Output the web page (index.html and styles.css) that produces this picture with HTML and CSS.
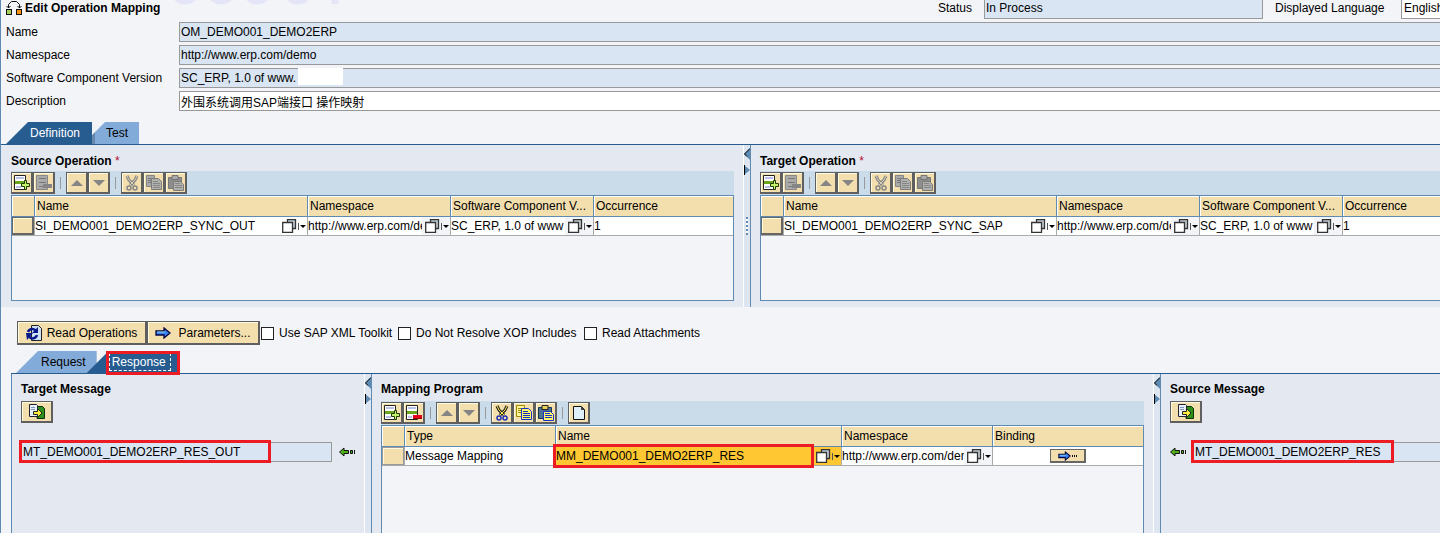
FILE: index.html
```html
<!DOCTYPE html>
<html lang="en">
<head>
<meta charset="utf-8">
<title>Edit Operation Mapping</title>
<link rel="stylesheet" href="styles.css">
</head>
<body>
<svg class="defs" aria-hidden="true">
  <symbol id="i-add" viewBox="0 0 16 16"><path d="M.5.5h11v14H.5z" fill="#fff" stroke="#222"/><path d="M2 2h8v2H2zM2 11h5v2H2z" fill="#b9bfe6"/><path d="M1 6h10v3H1z" fill="#6ba51e"/><path d="M10.500 5.500h2v3h3v3h-3v3h-2v-3h-3v-3h3z" fill="#c6ef6c" stroke="#1d3a00"/></symbol>
  <symbol id="i-del" viewBox="0 0 16 16"><path d="M.5.5h11v14H.5z" fill="#fff" stroke="#222"/><path d="M2 2h8v2H2zM2 11h4v2H2z" fill="#b9bfe6"/><path d="M1 6h10v3H1z" fill="#6ba51e"/><path d="M7 10h9v3H7z" fill="#e3001b"/><path d="M7 13.500h9" stroke="#900"/></symbol>
  <symbol id="i-del-off" viewBox="0 0 16 16"><path d="M.5.5h11v14H.5z" fill="#aaa" stroke="#888"/><path d="M3 3.500h7M3 7.500h7M3 11.500h4" stroke="#777"/><path d="M7 9h9v4H7z" fill="#858585"/></symbol>
  <symbol id="i-up" viewBox="0 0 16 16"><path d="M8 5l6 6H2z" fill="#858585"/></symbol>
  <symbol id="i-down" viewBox="0 0 16 16"><path d="M2 5h12l-6 6z" fill="#858585"/></symbol>
  <symbol id="i-cut" viewBox="0 0 16 16"><path d="M3 1l2 4 5 5M13 1l-2 4-5 5" fill="none" stroke="#222" stroke-width="3"/><path d="M3 1l2 4 5 5M13 1l-2 4-5 5" fill="none" stroke="#ffe94a"/><circle cx="5" cy="13" r="2" fill="none" stroke="#1d2fb5" stroke-width="1.500"/><circle cx="11" cy="13" r="2" fill="none" stroke="#1d2fb5" stroke-width="1.500"/></symbol>
  <symbol id="i-cut-off" viewBox="0 0 16 16"><path d="M3 1l2 4 5 5M13 1l-2 4-5 5" fill="none" stroke="#858585" stroke-width="3"/><path d="M3 1l2 4 5 5M13 1l-2 4-5 5" fill="none" stroke="#d8d0b8"/><circle cx="5" cy="13" r="2" fill="none" stroke="#858585" stroke-width="1.500"/><circle cx="11" cy="13" r="2" fill="none" stroke="#858585" stroke-width="1.500"/></symbol>
  <symbol id="i-copy" viewBox="0 0 16 16"><path d="M.5.500h8v11h-8z" fill="#fff6a0" stroke="#a08a00"/><path d="M2 3.500h4M2 5.500h4M2 7.500h4" stroke="#a08a00"/><path d="M5.500 3.500h7l3 3v8h-10z" fill="#fff56d" stroke="#1732c5"/><path d="M7 6.500h5M7 8.500h7M7 10.500h7M7 12.500h7" stroke="#1732c5"/></symbol>
  <symbol id="i-copy-off" viewBox="0 0 16 16"><path d="M.5.500h8v11h-8z" fill="#aaa" stroke="#858585"/><path d="M2 3.500h4M2 5.500h4M2 7.500h4" stroke="#777"/><path d="M5.500 3.500h7l3 3v8h-10z" fill="#b0b0ac" stroke="#7c7c7c"/><path d="M7 6.500h5M7 8.500h7M7 10.500h7M7 12.500h7" stroke="#868686"/></symbol>
  <symbol id="i-paste" viewBox="0 0 16 16"><path d="M.5 2.500h13v11H.5z" fill="#4d7190" stroke="#17364f"/><path d="M4 .5h6v4H4z" fill="#e8d25b" stroke="#222"/><path d="M5.500 6.500h7l3 3v6h-10z" fill="#fff56d" stroke="#1732c5"/><path d="M7 8.500h5M7 10.500h7M7 12.500h7" stroke="#1732c5"/></symbol>
  <symbol id="i-paste-off" viewBox="0 0 16 16"><path d="M.5 2.500h13v11H.5z" fill="#8d8d8d" stroke="#777"/><path d="M4 .5h6v4H4z" fill="#aaa" stroke="#777"/><path d="M5.500 6.500h7l3 3v6h-10z" fill="#b0b0ac" stroke="#7c7c7c"/><path d="M7 8.500h5M7 10.500h7M7 12.500h7" stroke="#868686"/></symbol>
  <symbol id="i-new" viewBox="0 0 16 16"><path d="M2.500 1.500h8l3 3v10h-11z" fill="#deeffa" stroke="#111"/><path d="M10 1v4h4z" fill="#444"/></symbol>
  <symbol id="i-help" viewBox="0 0 24 14"><path d="M5.500.5h8v9h-8z" fill="#c2cdd6" stroke="#333" stroke-width="1.300"/><path d="M.7 3.500h9.800v9.800H.7z" fill="#fff" stroke="#333" stroke-width="1.300"/><path d="M16.500 4v7" stroke="#555"/><path d="M18 6h6l-3 3z" fill="#000"/></symbol>
  <symbol id="i-arrow" viewBox="0 0 16 12"><path d="M1 4h8V1l6 5-6 5V8H1z" fill="#3b7ff0" stroke="#04063e" stroke-width="1.300"/><path d="M2 5h8" stroke="#8fe0ff"/></symbol>
  <symbol id="i-green" viewBox="0 0 16 10"><path d="M.5 5L5 1v2.500h4.500v3H5V9z" fill="#4dae17" stroke="#111"/><path d="M11.500 3.500h2v3h-2z" fill="#4dae17" stroke="#111"/><path d="M15.500 3v4" stroke="#111"/></symbol>
  <symbol id="i-goto" viewBox="0 0 16 16"><path d="M8 2.500h5.500l2 2v10H8z" fill="#2d8f1a" stroke="#0b3206"/><path d="M.5.500h7l1 1v11h-8z" fill="#e8f2fb" stroke="#223"/><path d="M2 3.500h4M2 5.500h4" stroke="#7c93c0"/><path d="M4.500 7.500h4v-3L13 9l-4.500 4.500v-3h-4z" fill="#ffee3d" stroke="#222"/></symbol>
  <symbol id="i-tri-l" viewBox="0 0 6 12"><path d="M6 0v12L0 6z" fill="#5f8bb2"/><path d="M6 .5L.5 6 3 8.500" fill="none" stroke="#000"/></symbol>
  <symbol id="i-tri-r" viewBox="0 0 6 12"><path d="M0 1v10l6-5z" fill="#5f8bb2"/><path d="M.5 1v10" stroke="#000"/></symbol>
</svg>
<div class="app">
  <header class="head">
    <svg class="watermark" width="250" height="6" aria-hidden="true"><g fill="none" stroke="#e4e6f8" stroke-width="7"><ellipse cx="84" cy="-12" rx="12" ry="13"/><ellipse cx="120" cy="-12" rx="12" ry="13"/><ellipse cx="156" cy="-12" rx="12" ry="13"/><ellipse cx="197" cy="-12" rx="12" ry="13"/><path d="M234 0v4"/></g></svg>
    <h1 class="title"><svg width="16" height="16" viewBox="0 0 16 16"><path d="M2.500 8V4.500l3-3h5l3 3V8M.5 6l2 2 2-2M11.500 6l2 2 2-2" fill="none" stroke="#111"/><path d="M0 9h6v6H0zM10 9h6v6h-6z" fill="#111"/><path d="M1 10h4v4H1z" fill="#a6cf5b"/><path d="M11 10h4v4h-4z" fill="#ff9210"/></svg>Edit Operation Mapping</h1>
    <label for="status">Status</label>
    <input id="status" class="field cut" readonly value="In Process">
    <label for="lang" class="langlabel">Displayed Language</label>
    <div class="lang"><select id="lang"><option>English (Original Language)</option></select></div>
  </header>
  <div class="form">
    <label for="f1">Name</label><input id="f1" class="field" readonly value="OM_DEMO001_DEMO2ERP">
    <label for="f2">Namespace</label><input id="f2" class="field" readonly value="http://www.erp.com/demo">
    <label for="f3">Software Component Version</label><div class="wrap"><input id="f3" class="field" readonly value="SC_ERP, 1.0 of www."><span class="mask"></span></div>
    <label for="f4">Description</label><input id="f4" class="field edit" value="外围系统调用SAP端接口 操作映射">
  </div>

  <nav class="tabs">
    <button class="tab on">Definition</button><button class="tab next">Test</button>
  </nav>

  <main class="split top">
    <section class="pane">
      <h2>Source Operation <b class="req">*</b></h2>
      <div class="toolbar">
        <button class="tb" aria-label="Add"><svg><use href="#i-add"/></svg></button><button class="tb" aria-label="Remove"><svg><use href="#i-del-off"/></svg></button><i class="sep"></i>
        <button class="tb" aria-label="Up"><svg><use href="#i-up"/></svg></button><button class="tb" aria-label="Down"><svg><use href="#i-down"/></svg></button><i class="sep"></i>
        <button class="tb" aria-label="Cut"><svg><use href="#i-cut-off"/></svg></button><button class="tb" aria-label="Copy"><svg><use href="#i-copy-off"/></svg></button><button class="tb" aria-label="Paste"><svg><use href="#i-paste-off"/></svg></button>
      </div>
      <div class="grid">
        <table>
          <colgroup><col class="c-sel"><col><col class="c-ns"><col class="c-ns"><col class="c-occ"></colgroup>
          <thead><tr><th></th><th>Name</th><th>Namespace</th><th>Software Component V...</th><th>Occurrence</th></tr></thead>
          <tbody><tr>
            <td><button class="rowsel" aria-label="Select row"></button></td>
            <td><div class="cell"><input aria-label="Name" value="SI_DEMO001_DEMO2ERP_SYNC_OUT"><button class="help plain" aria-label="Choose"><svg><use href="#i-help"/></svg></button></div></td>
            <td><div class="cell"><input aria-label="Namespace" value="http://www.erp.com/demo"><button class="help" aria-label="Choose"><svg><use href="#i-help"/></svg></button></div></td>
            <td><div class="cell"><input aria-label="Software Component Version" value="SC_ERP, 1.0 of www"><button class="help" aria-label="Choose"><svg><use href="#i-help"/></svg></button></div></td>
            <td><div class="cell">1</div></td>
          </tr></tbody>
        </table>
      </div>
    </section>
    <div class="bar"><svg><use href="#i-tri-l"/></svg><svg><use href="#i-tri-r"/></svg><span class="grip"></span></div>
    <section class="pane bleed">
      <h2>Target Operation <b class="req">*</b></h2>
      <div class="toolbar">
        <button class="tb" aria-label="Add"><svg><use href="#i-add"/></svg></button><button class="tb" aria-label="Remove"><svg><use href="#i-del-off"/></svg></button><i class="sep"></i>
        <button class="tb" aria-label="Up"><svg><use href="#i-up"/></svg></button><button class="tb" aria-label="Down"><svg><use href="#i-down"/></svg></button><i class="sep"></i>
        <button class="tb" aria-label="Cut"><svg><use href="#i-cut-off"/></svg></button><button class="tb" aria-label="Copy"><svg><use href="#i-copy-off"/></svg></button><button class="tb" aria-label="Paste"><svg><use href="#i-paste-off"/></svg></button>
      </div>
      <div class="grid">
        <table>
          <colgroup><col class="c-sel"><col><col class="c-ns"><col class="c-ns"><col class="c-occ"></colgroup>
          <thead><tr><th></th><th>Name</th><th>Namespace</th><th>Software Component V...</th><th>Occurrence</th></tr></thead>
          <tbody><tr>
            <td><button class="rowsel" aria-label="Select row"></button></td>
            <td><div class="cell"><input aria-label="Name" value="SI_DEMO001_DEMO2ERP_SYNC_SAP"><button class="help plain" aria-label="Choose"><svg><use href="#i-help"/></svg></button></div></td>
            <td><div class="cell"><input aria-label="Namespace" value="http://www.erp.com/demo"><button class="help" aria-label="Choose"><svg><use href="#i-help"/></svg></button></div></td>
            <td><div class="cell"><input aria-label="Software Component Version" value="SC_ERP, 1.0 of www"><button class="help" aria-label="Choose"><svg><use href="#i-help"/></svg></button></div></td>
            <td><div class="cell">1</div></td>
          </tr></tbody>
        </table>
      </div>
    </section>
  </main>

  <div class="actions">
    <button class="act read"><svg width="16" height="16" viewBox="0 0 16 16"><path d="M5.500.500h7l3 3v12h-10z" fill="#cfe3f5" stroke="#222"/><path d="M2 7a4.500 4.500 0 0 1 8-1" fill="none" stroke="#06188c" stroke-width="2.500"/><path d="M12 2v6H6z" fill="#06188c"/><path d="M11 10a4.500 4.500 0 0 1-8 1.500" fill="none" stroke="#06188c" stroke-width="2.500"/><path d="M0 8h7l-6 7z" fill="#06188c"/></svg>Read Operations</button><button class="act par"><svg width="16" height="12"><use href="#i-arrow"/></svg>Parameters...</button>
    <label><input type="checkbox">Use SAP XML Toolkit</label>
    <label><input type="checkbox">Do Not Resolve XOP Includes</label>
    <label><input type="checkbox">Read Attachments</label>
  </div>

  <nav class="tabs sub">
    <button class="tab off">Request</button><span class="marked"><button class="tab on res"><span class="focus">Response</span></button></span>
  </nav>

  <div class="split low">
    <section class="pane msg">
      <h2>Target Message</h2>
      <button class="goto" aria-label="Open"><svg><use href="#i-goto"/></svg></button>
      <div class="msgrow">
        <div class="wrap m-out"><input aria-label="Target Message" class="field" readonly value="MT_DEMO001_DEMO2ERP_RES_OUT"></div>
        <svg class="green"><use href="#i-green"/></svg>
      </div>
    </section>
    <div class="bar"><svg><use href="#i-tri-l"/></svg><svg><use href="#i-tri-r"/></svg></div>
    <section class="pane map">
      <h2>Mapping Program</h2>
      <div class="toolbar">
        <button class="tb" aria-label="Add"><svg><use href="#i-add"/></svg></button><button class="tb" aria-label="Remove"><svg><use href="#i-del"/></svg></button><i class="sep"></i>
        <button class="tb" aria-label="Up"><svg><use href="#i-up"/></svg></button><button class="tb" aria-label="Down"><svg><use href="#i-down"/></svg></button><i class="sep"></i>
        <button class="tb" aria-label="Cut"><svg><use href="#i-cut"/></svg></button><button class="tb" aria-label="Copy"><svg><use href="#i-copy"/></svg></button><button class="tb" aria-label="Paste"><svg><use href="#i-paste"/></svg></button><i class="sep"></i>
        <button class="tb" aria-label="New"><svg><use href="#i-new"/></svg></button>
      </div>
      <div class="grid">
        <table>
          <colgroup><col class="c-sel"><col class="c-type"><col><col class="c-type"><col class="c-type"></colgroup>
          <thead><tr><th></th><th>Type</th><th>Name</th><th>Namespace</th><th>Binding</th></tr></thead>
          <tbody><tr>
            <td><button class="rowsel pressed" aria-label="Select row"></button></td>
            <td><div class="cell">Message Mapping</div></td>
            <td class="hot"><div class="cell"><input aria-label="Name" value="MM_DEMO001_DEMO2ERP_RES"><button class="help plain" aria-label="Choose"><svg><use href="#i-help"/></svg></button></div></td>
            <td><div class="cell"><input aria-label="Namespace" value="http://www.erp.com/demo"><button class="help" aria-label="Choose"><svg><use href="#i-help"/></svg></button></div></td>
            <td><div class="cell mid"><button class="bind" aria-label="Binding"><svg width="13" height="10" viewBox="0 0 16 12"><use href="#i-arrow"/></svg><svg width="6" height="2"><path d="M0 1h6" stroke="#111" stroke-width="2" stroke-dasharray="1 1"/></svg></button></div></td>
          </tr></tbody>
        </table>
      </div>
    </section>
    <div class="bar"><svg><use href="#i-tri-l"/></svg><svg><use href="#i-tri-r"/></svg></div>
    <section class="pane msg src">
      <h2>Source Message</h2>
      <button class="goto" aria-label="Open"><svg><use href="#i-goto"/></svg></button>
      <div class="msgrow">
        <svg class="green"><use href="#i-green"/></svg>
        <div class="wrap m-in"><input aria-label="Source Message" class="field" readonly value="MT_DEMO001_DEMO2ERP_RES"></div>
      </div>
    </section>
  </div>
</div>
</body>
</html>
```
FILE: styles.css
```css
*, *::before, *::after { box-sizing: border-box; }
body {
  margin: 0;
  background: #f3f4f8;
  color: #000;
  font: 12px/16px "Liberation Sans", Arial, "Noto Sans CJK SC", sans-serif;
}
button, input, select { font: inherit; color: inherit; margin: 0; padding: 0; border: 0; border-radius: 0; outline: 0; }
svg { display: block; flex: none; }
.defs { position: absolute; width: 0; height: 0; }
.app {
  display: flex;
  flex-direction: column;
  height: 100vh;
  overflow: hidden;
  border-left: 1px solid #5f8bb2;
}
.app > * { flex-shrink: 0; }

/* header and form */
.head {
  position: relative;
  display: grid;
  grid-template-columns: 1fr auto 279px auto 39px;
  column-gap: 12px;
  height: 19px;
  align-items: start;
}
.langlabel { min-width: 114px; }
.watermark { position: absolute; left: 100px; top: 0; }
.title { position: relative; display: flex; gap: 3px; margin: 0; padding-left: 5px; font-size: 12px; }
.field {
  width: 100%;
  height: 20px;
  padding: 0 1px;
  border: 1px solid #999;
  background: #d9e5f2;
}
.field.edit { background: #fff; }
.field.cut { height: 19px; padding-bottom: 3px; border-top: 0; }
.lang { height: 19px; overflow: hidden; border: solid #999; border-width: 0 0 1px 1px; background: #fff; }
.lang select { appearance: none; width: 180px; height: 16px; padding-left: 2px; background: #fff; }
.form {
  display: grid;
  grid-template-columns: 173px 1fr;
  row-gap: 3px;
  padding: 3px 0 0 5px;
  margin-right: -2px;
}
.form label { line-height: 20px; }
.wrap { position: relative; }
.wrap .field { display: block; }
.mask { position: absolute; left: 119px; top: 0; width: 45px; height: 17px; background: #fff; }

/* tabs */
.tabs { display: flex; height: 23px; margin-top: 11px; padding-left: 5px; border-bottom: 1px solid #265c8f; }
.tab { height: 22px; }
.tab.on {
  padding: 0 12px 0 24px;
  background: #265c8f;
  color: #fff;
  clip-path: polygon(22px 0, 100% 0, 100% 100%, 0 100%);
}
.tab.next { padding: 0 11px 0 14px; background: linear-gradient(90deg, #6488ad 3px, #83abd9 3px); clip-path: polygon(13px 0, 100% 0, 100% 100%, 0 100%, 0 13px); }
.tab.off { padding: 0 11px 0 25px; background: #83abd9; clip-path: polygon(22px 0, 100% 0, 100% 100%, 0 100%); }
.tabs.sub { margin: 6px 0 0 10px; }
.marked { position: relative; margin-left: -10px; }
.marked::after { content: ""; position: absolute; inset: 0 -1px -2px 19px; border: 3px solid #ed1c24; }
.tab.res { display: block; padding: 2px 8px 2px 22px; }
.focus { display: block; padding: 0 4px 0 2px; border: 1px dashed #fff; }

/* split areas */
.split { display: grid; background: #e4e9f1; }
.top { grid-template-columns: 742fr 8px 689fr; height: 162px; }
.low { flex: 1 1 0; min-height: 100px; margin-left: 10px; border-left: 1px solid #5f8bb2; grid-template-columns: 352fr 8px 781fr 8px 279fr; }
.pane { display: flex; flex-direction: column; min-width: 0; overflow: hidden; padding: 8px 9px 6px 10px; }
.low .pane { padding: 7px 9px 0; }
.pane.bleed { padding-left: 9px; padding-right: 0; }
h2 { margin: 0 0 2px; font-size: 12px; line-height: 16px; }
.low h2 { margin-bottom: 4px; }
.req { color: #b01030; font-weight: 400; }
.bar {
  display: flex;
  flex-direction: column;
  gap: 4px;
  padding-top: 3px;
  border-left: 1px solid #fff;
  border-right: 1px solid #5f8bb2;
  background: #dde6f0;
}
.bar svg { width: 6px; height: 12px; }
.grip { width: 2px; height: 18px; margin: 37px 0 0 2px; background: repeating-linear-gradient(#5f8bb2 0 2px, #fff 2px 4px); }

/* toolbars */
.toolbar { display: flex; align-items: center; height: 24px; background: #cadbea; }
.tb {
  display: grid;
  place-items: center;
  flex: none;
  width: 22px;
  height: 22px;
  border: solid #5f5f5f;
  border-width: 1px 2px 2px 1px;
  background: #f3dfae;
  box-shadow: inset 1px 1px #fffbe0;
}
.tb svg { width: 16px; height: 16px; }
.sep { width: 1px; height: 12px; margin: 0 5px; background: #999; }

/* tables */
.grid { flex: 1; border: 1px solid #5f8bb2; overflow: hidden; background: #f3f4f8; }
.low .grid { border-bottom: 0; }
.bleed .grid { border-right: 0; }
table { width: 100%; border-collapse: separate; border-spacing: 0; table-layout: fixed; }
.bleed table { min-width: 721px; }
.c-sel { width: 22px; }
.c-ns { width: 143px; }
.c-occ { width: 140px; }
.c-type { width: 151px; }
th {
  height: 21px;
  padding: 0 0 0 2px;
  border-left: 1px solid #5f8bb2;
  border-bottom: 1px solid #5f8bb2;
  background: #f3dfae;
  box-shadow: inset 1px 1px #fff;
  font-weight: 400;
  text-align: left;
  white-space: nowrap;
}
th:first-child { border-left: 0; }
td { height: 19px; padding: 0; border-left: 1px solid #aaa; border-bottom: 1px solid #aaa; background: #fff; }
td:first-child { border-left: 0; }
.cell { display: flex; height: 18px; align-items: center; }
.cell input { flex: 1; min-width: 0; height: 18px; background: none; }
.cell.mid { justify-content: center; }
.help { flex: none; width: 28px; height: 18px; padding-left: 3px; background: #f3f4f8; }
.help.plain { background: none; }
.help svg { width: 24px; height: 14px; }
.rowsel { display: block; width: 100%; height: 18px; border: solid #666; border-width: 1px 2px 2px 1px; background: #f3dfae; box-shadow: inset 1px 1px #fffbe0; }
.rowsel.pressed { border: 1px solid #999; }
.hot { background: #ffc832; }
.hot .cell { position: relative; }
.hot .cell::after { content: ""; position: absolute; inset: -3px 27px -3px -3px; border: 3px solid #ed1c24; }
.bind { display: flex; gap: 1px; align-items: center; justify-content: center; width: 36px; height: 14px; border: solid #666; border-width: 1px 2px 2px 1px; background: #f3dfae; }

/* action row */
.actions { display: flex; align-items: center; margin-top: 14px; padding-left: 16px; white-space: nowrap; }
.act {
  display: flex;
  align-items: center;
  justify-content: center;
  height: 24px;
  border: solid #5f5f5f;
  border-width: 1px 2px 2px 1px;
  background: #f3dfae;
  box-shadow: inset 1px 1px #fffbe0;
}
.read { width: 130px; gap: 5px; }
.par { width: 113px; gap: 7px; }
.actions label { display: flex; align-items: center; gap: 5px; margin-left: 1px; min-width: 136px; }
.actions label:nth-of-type(2) { min-width: 185px; }
.actions input { appearance: none; width: 13px; height: 13px; border: 1px solid #222; background: #fff; }

/* message panes */
.goto { display: grid; place-items: center; align-self: flex-start; width: 32px; height: 22px; border: solid #5f5f5f; border-width: 1px 2px 2px 1px; background: #f3dfae; box-shadow: inset 1px 1px #fffbe0; }
.goto svg { width: 16px; height: 16px; }
.msgrow { display: flex; align-items: center; gap: 7px; margin-top: 19px; }
.msgrow .wrap { flex: 1; min-width: 0; }
.green { width: 16px; height: 10px; }
.m-out::after, .m-in::after { content: ""; position: absolute; left: -2px; top: -2px; height: 23px; border: 3px solid #ed1c24; }
.m-out::after { width: 252px; }
.m-in::after { width: 203px; }
.low .pane.msg { overflow: visible; }
.low .pane.src { padding-right: 0; }
.src .msgrow { margin-right: -2px; }
```
